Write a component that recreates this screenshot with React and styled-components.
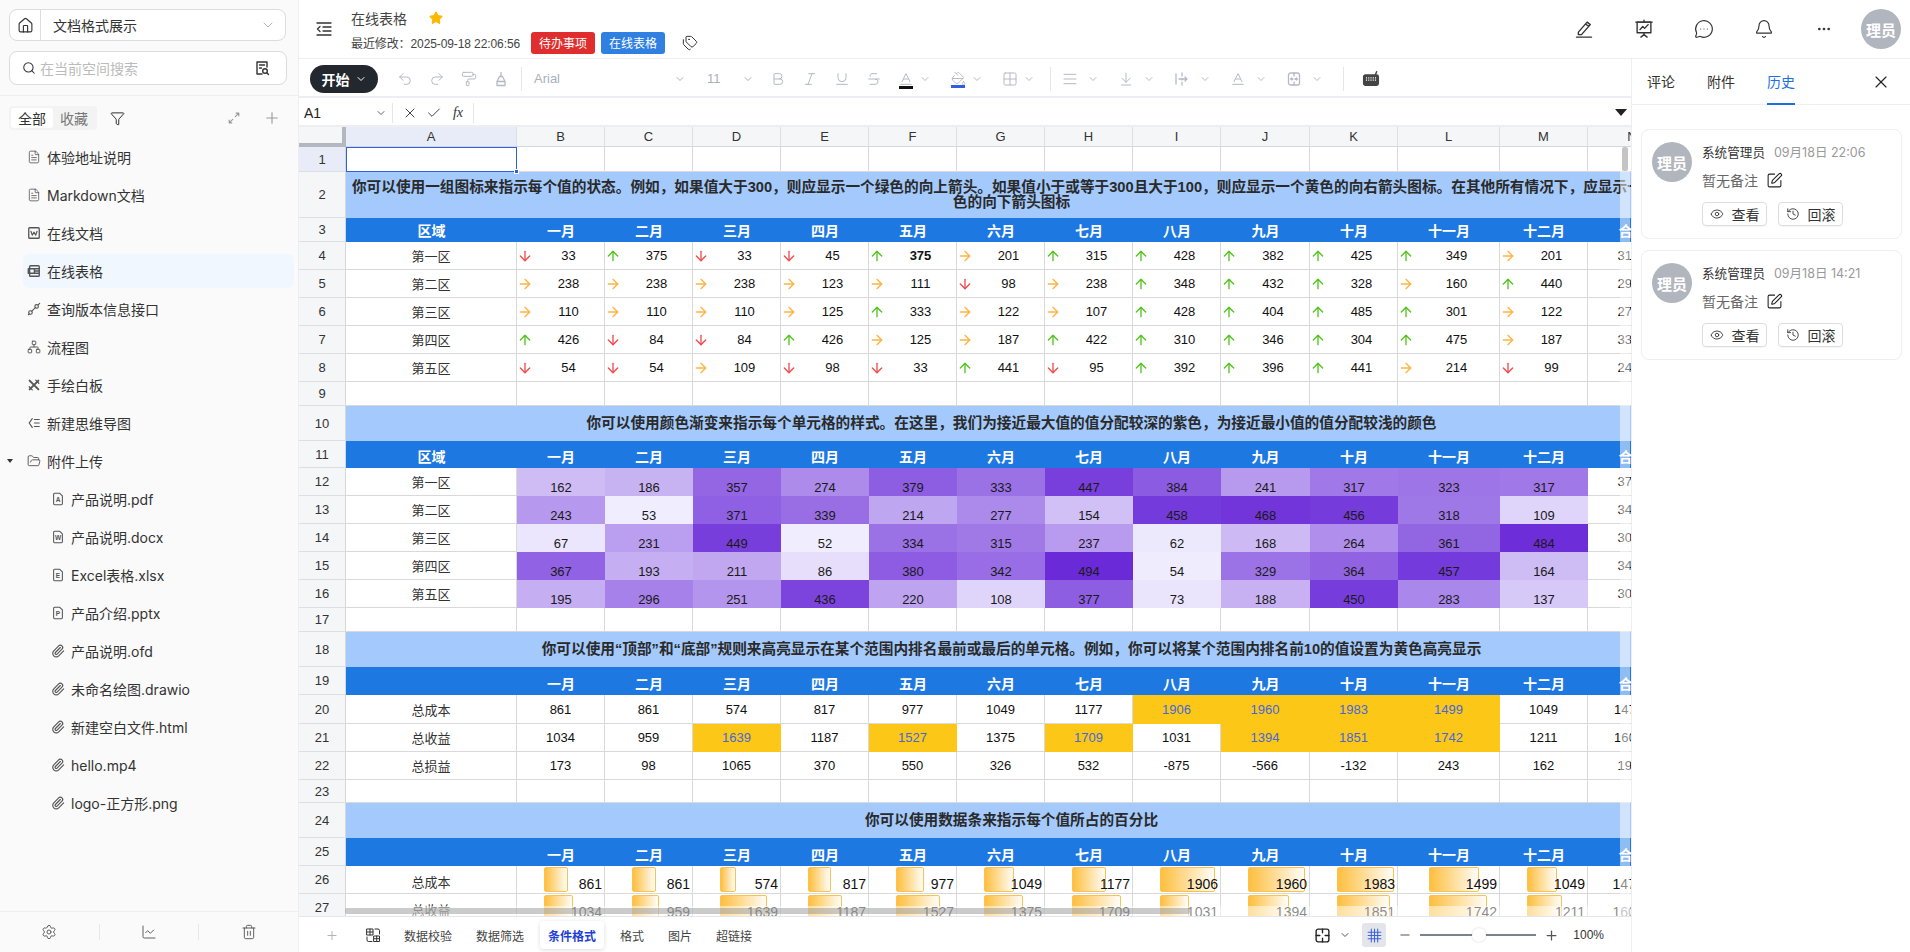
import React from "react";
import styled, { createGlobalStyle } from "styled-components";
import {
  House, ChevronDown, Search, Funnel, Plus, FileText, Network, Paperclip, Settings, ChartLine, Trash2,
  Undo2, Redo2, PaintRoller, Bold, Italic, Underline, Strikethrough, Grid2x2, AlignJustify, ArrowDownToLine,
  MessageCircleMore, Bell, Ellipsis, X, Check, Eye, History, SquarePen, Tags, Star, ArrowUp, ArrowRight,
  ArrowDown, Minus, FolderOpen, PaintBucket, Baseline,
} from "lucide-react";

const UI = `Inter, "Noto Sans CJK SC", sans-serif`;
const SHEET = `"Liberation Sans", "Noto Sans CJK SC", sans-serif`;

const Global = createGlobalStyle`
  html, body { margin: 0; height: 100%; overflow: hidden; background: #fff; }
  #root { height: 100%; }
  * { box-sizing: border-box; }
`;

const Page = styled.div`
  display: flex; width: 1910px; height: 952px; font-family: ${UI}; color: #333; font-size: 14px;
`;

/* ---------- Sidebar ---------- */
const Sidebar = styled.aside`
  width: 299px; flex: none; display: flex; flex-direction: column; background: #fafafa; border-right: 1px solid #eee;
`;
const SpaceSelect = styled.div`
  margin: 9px 12px 0 9px; height: 32px; display: flex; align-items: center; background: #fff;
  border: 1px solid #dcdcdc; border-radius: 8px; color: #b5b5b5;
`;
const HomeBox = styled.div`
  width: 31px; height: 100%; display: flex; align-items: center; justify-content: center; border-right: 1px solid #dcdcdc; color: #333;
`;
const SpaceName = styled.div`
  flex: 1; padding-left: 12px; color: #333; font-size: 14px;
`;
const SearchBox = styled.div`
  margin: 10px 11px 0 9px; height: 34px; display: flex; align-items: center; gap: 4px; padding: 0 16px 0 12px;
  background: #fff; border: 1px solid #dcdcdc; border-radius: 8px; color: #bbb; font-size: 14px;
  svg { flex: none; color: #333; }
`;
const SearchHint = styled.div` flex: 1; `;
const SideDivider = styled.div` margin-top: 10px; height: 1px; background: #eee; `;
const FilterRow = styled.div`
  margin: 10px 17px 0 9px; height: 24px; display: flex; align-items: center;
`;
const Segmented = styled.div`
  width: 88px; height: 24px; padding: 2px; display: flex; background: #f3f3f3; border-radius: 4px;
`;
const Segment = styled.div`
  flex: 1; display: flex; align-items: center; justify-content: center; font-size: 14px; border-radius: 3px;
  background: ${(p) => (p.$active ? "#fff" : "transparent")}; color: ${(p) => (p.$active ? "#333" : "#777")};
`;
const FilterIcon = styled.div` margin-left: 13px; display: flex; color: #222; `;
const FilterActions = styled.div`
  margin-left: auto; display: flex; align-items: center; gap: 22px; color: #999;
`;
const TreeList = styled.div` margin-top: 8px; display: flex; flex-direction: column; `;
const TreeRow = styled.div`
  height: 34px; margin: 2px 4px 2px ${(p) => (p.$child ? 47 : 23)}px; padding-left: 4px; display: flex; align-items: center; gap: 6px;
  border-radius: 6px; position: relative; font-size: 14px; color: #333; white-space: nowrap;
  background: ${(p) => (p.$active ? "#f0f7ff" : "transparent")};
`;
const TreeIcon = styled.span`
  width: 14px; height: 14px; flex: none; display: flex; align-items: center; justify-content: center; color: #555;
`;
const Caret = styled.span`
  position: absolute; left: -16px; top: 15px; width: 0; height: 0;
  border-left: 3.5px solid transparent; border-right: 3.5px solid transparent; border-top: 4px solid #333;
`;
const SideFooter = styled.div`
  margin-top: auto; height: 41px; display: flex; align-items: center; border-top: 1px solid #eee;
`;
const FooterCell = styled.div`
  flex: 1; height: 16px; display: flex; align-items: center; justify-content: center; color: #555;
  border-right: ${(p) => (p.$last ? "none" : "1px solid #e8e8e8")};
`;

/* ---------- Main ---------- */
const Main = styled.main` flex: 1; min-width: 0; display: flex; flex-direction: column; `;
const TopBar = styled.header`
  height: 59px; flex: none; display: flex; align-items: center; padding: 0 9px 0 17px; border-bottom: 1px solid #eee;
`;
const MenuToggle = styled.div` width: 18px; display: flex; color: #333; `;
const TitleBlock = styled.div` margin-left: 17px; display: flex; flex-direction: column; `;
const TitleLine = styled.div`
  height: 20px; display: flex; align-items: center; font-size: 14px; color: #444; margin-top: 3px;
  svg { margin-left: 22px; color: #fdb900; fill: #fdb900; }
`;
const MetaLine = styled.div`
  margin-top: 4px; height: 22px; display: flex; align-items: center; font-size: 12px; color: #444;
`;
const MetaText = styled.span`
  width: 180px; white-space: nowrap; font-family: ${SHEET}; letter-spacing: -0.1px;
`;
const Tag = styled.span`
  width: 64px; height: 22px; margin-right: 6px; display: flex; align-items: center; justify-content: center;
  border-radius: 3px; color: #fff; font-size: 12px; background: ${(p) => p.$color};
`;
const TagIcon = styled.span` margin-left: 11px; display: flex; color: #333; `;
const TopActions = styled.div` margin-left: auto; display: flex; align-items: center; `;
const TopIcon = styled.div`
  width: 60px; display: flex; justify-content: center; color: #333;
`;
const UserAvatar = styled.div`
  width: ${(p) => p.$size}px; height: ${(p) => p.$size}px; flex: none; border-radius: 50%; background: #b1b5bd; color: #fff;
  font-weight: 700; font-size: 15px; display: flex; align-items: center; justify-content: center; white-space: nowrap;
  margin-left: ${(p) => p.$ml || 0}px;
`;
const Workspace = styled.div` flex: 1; min-height: 0; display: flex; `;
const SheetColumn = styled.section` width: 1332px; flex: none; display: flex; flex-direction: column; `;

/* ---------- Toolbar ---------- */
const Toolbar = styled.div`
  height: 39px; flex: none; display: flex; align-items: center; padding: 2px 0 0 11px; border-bottom: 2px solid #eceef2; color: #b3b9c5;
`;
const StartPill = styled.div`
  width: 68px; height: 28px; border-radius: 14px; background: #23272e; color: #fff; font-weight: 700; font-size: 14px;
  display: flex; align-items: center; justify-content: center; gap: 5px; margin-right: 11px;
`;
const ToolBtn = styled.div`
  width: 32px; height: 24px; flex: none; display: flex; align-items: center; justify-content: center; color: #b3b9c5;
`;
const ToolDrop = styled.div`
  width: ${(p) => p.$w}px; flex: none; display: flex; align-items: center; color: #b3b9c5; margin-left: ${(p) => p.$ml || 0}px;
`;
const ToolDropIcon = styled.span` width: 24px; display: flex; justify-content: center; position: relative; `;
const ColorBar = styled.span`
  position: absolute; left: 5px; right: 5px; bottom: -2px; height: 3px; background: ${(p) => p.$color};
`;
const ToolChevron = styled.span` margin-left: ${(p) => p.$gap}px; display: flex; color: #b3b9c5; `;
const ToolDivider = styled.div`
  width: 1px; height: 24px; flex: none; background: #e4e6ea; margin: 0 ${(p) => p.$r}px 0 ${(p) => p.$l}px;
`;
const FontSelect = styled.div`
  width: ${(p) => p.$w}px; margin-right: ${(p) => p.$mr}px; padding: 0 0 0 ${(p) => p.$pl}px; flex: none; display: flex; align-items: center;
  justify-content: space-between; font-size: 13px; color: #a9afbb; font-family: ${SHEET};
`;

/* ---------- Formula ---------- */
const FormulaBar = styled.div`
  height: 29px; flex: none; display: flex; align-items: center; padding-top: 2px; border-bottom: 2px solid #eceef2; color: #333;
`;
const NameBox = styled.div`
  width: 94px; height: 20px; padding: 0 5px 0 5px; display: flex; align-items: center; justify-content: space-between;
  border-right: 1px solid #e4e6ea; font-family: ${SHEET}; font-size: 14px; color: #222;
  svg { color: #666; }
`;
const FormulaBtn = styled.div`
  width: 24px; display: flex; justify-content: center; color: #333; font: italic 14px "Liberation Serif", serif;
`;
const FormulaActions = styled.div`
  height: 20px; padding: 0 3px 0 5px; display: flex; align-items: center; border-right: 1px solid #e4e6ea;
`;
const FormulaArrow = styled.div`
  margin-left: auto; margin-right: 4px; width: 0; height: 0;
  border-left: 6px solid transparent; border-right: 6px solid transparent; border-top: 7px solid #222;
`;

/* ---------- Grid ---------- */
const Viewport = styled.div` flex: 1; min-height: 0; position: relative; overflow: hidden; background: #fff; `;
const GridBox = styled.div`
  display: grid; width: max-content; font-family: ${SHEET}; font-size: 13px; color: #111;
  grid-template-columns: 47px 171px repeat(8, 88px) 89px 88px 102px 88px 89px;
  grid-template-rows: 20px 25px 46px 24px repeat(5, 28px) 24px 35px 27px repeat(5, 28px) 24px 35px 28px 29px 28px 28px 23px 35px 28px 28px 28px;
`;
const Corner = styled.div`
  background: #f5f6f8; border-right: 4px solid #b3b8c0; border-bottom: 4px solid #b3b8c0;
`;
const ColHead = styled.div`
  display: flex; align-items: center; justify-content: center; color: #333; border-right: 1px solid #dcdfe4; border-bottom: 1px solid #d4d7dc;
  background: ${(p) => (p.$active ? "#e8ecf8" : "#f5f6f8")};
`;
const RowHead = styled.div`
  display: flex; align-items: center; justify-content: center; color: #333; border-right: 1px solid #d4d7dc; border-bottom: 1px solid #dcdfe4;
  background: ${(p) => (p.$active ? "#e8ecf8" : "#f5f6f8")};
`;
const Cell = styled.div`
  display: flex; align-items: center; justify-content: center; overflow: hidden; white-space: nowrap; background: #fff;
  border-right: 1px solid #d9d9d9; border-bottom: 1px solid #d9d9d9;
`;
const ActiveCell = styled.div`
  position: relative; background: #fff; border: 1px solid #2f5fe0;
`;
const FillHandle = styled.span`
  position: absolute; right: -3px; bottom: -3px; width: 5px; height: 5px; background: #2f5fe0; border: 1px solid #fff;
`;
const LabelCell = styled(Cell)` color: #333; `;
const LabelLow = styled(Cell)` color: #333; align-items: flex-end; padding-bottom: 2px; `;
const TitleCell = styled.div`
  grid-column: span 14; display: flex; align-items: center; justify-content: center; text-align: center; padding: 0 5px;
  background: #a3c9fd; color: #2a2a2a; font-weight: 700; font-size: 14.67px; line-height: 15px;
`;
const HeaderCell = styled.div`
  display: flex; align-items: flex-end; justify-content: center; padding-bottom: 2px; overflow: hidden; white-space: nowrap;
  background: #1e78e2; color: #fff; font-weight: 700; font-size: 14px;
`;
const IconCell = styled(Cell)` justify-content: flex-start; `;
const ArrowBox = styled.span`
  width: 16px; flex: none; display: flex; justify-content: center;
  color: ${(p) => ({ up: "#52c41a", right: "#ffb340", down: "#f5484a" })[p.$dir]};
`;
const ArrowValue = styled.span`
  flex: 1; text-align: center; font-weight: ${(p) => (p.$bold ? 700 : 400)};
`;
const HeatCell = styled.div`
  display: flex; align-items: flex-end; justify-content: center; padding-bottom: 1px; color: #1a1a1a;
`;
const RankCell = styled(Cell)`
  ${(p) => p.$hot && `background: #fcc716; color: #4668d8; border-color: #fcc716;`}
`;
const BarCell = styled(Cell)`
  position: relative; justify-content: flex-end; align-items: flex-end; padding: 0 2px 1px 0; font-size: 14px; overflow: hidden;
`;
const BarFill = styled.span`
  position: absolute; top: 1px; bottom: 1px; border: 1px solid #fdc14e; border-radius: 2px;
  background: linear-gradient(90deg, #fdbf3f, #fffdf8);
`;
const BarValue = styled.span` position: relative; `;
const PlainLow = styled(Cell)` align-items: flex-end; padding-bottom: 1px; font-size: 14px; `;

const VOverlay = styled.div`
  position: absolute; left: 1321px; width: 10px; top: 20px; bottom: 0; background: rgba(255,255,255,.5);
`;
const VThumb = styled.div`
  position: absolute; left: 1323px; width: 6px; top: 20px; height: 24px; background: #c4c4c4; border-radius: 2px;
`;
const HOverlay = styled.div`
  position: absolute; left: 47px; right: 0; bottom: 0; height: 10px; background: rgba(255,255,255,.5);
`;
const HThumb = styled.div`
  position: absolute; left: 46px; width: 845px; bottom: 2px; height: 6px; background: rgba(130,130,130,.42); border-radius: 2px;
`;

/* ---------- Sheet tabs ---------- */
const SheetTabs = styled.div`
  height: 36px; flex: none; display: flex; align-items: center; padding: 1px 27px 0 26px; border-top: 1px solid #e4e6ea; font-size: 12px; color: #444;
`;
const AddSheet = styled.div` width: 14px; display: flex; color: #aaa; `;
const TabsIcon = styled.div` margin: 0 15px 0 26px; display: flex; color: #333; `;
const TabsList = styled.div` display: flex; gap: 8px; align-items: center; `;
const SheetTab = styled.div`
  height: 28px; padding: 0 8px; display: flex; align-items: center; border-radius: 4px;
  ${(p) => p.$active && `color: #1f3fd6; font-weight: 600; background: #fff; box-shadow: 0 1px 4px rgba(0,0,0,.14);`}
`;
const ZoomTools = styled.div` margin-left: auto; display: flex; align-items: center; color: #555; `;
const GridToggle = styled.div`
  width: 24px; height: 24px; margin: 0 12px 0 11px; display: flex; align-items: center; justify-content: center;
  background: #e3e5ea; border-radius: 3px; color: #3f64db;
`;
const SliderTrack = styled.div`
  position: relative; width: 116px; height: 2.5px; margin: 0 8px; background: #7a8290;
`;
const SliderKnob = styled.span`
  position: absolute; left: 52px; top: -6px; width: 14px; height: 14px; border-radius: 50%; background: #fff; box-shadow: 0 0 2px rgba(0,0,0,.2);
`;
const ZoomLabel = styled.span` margin-left: 14px; color: #333; font-size: 12px; font-family: ${SHEET}; `;

/* ---------- Right panel ---------- */
const SidePanel = styled.aside`
  flex: 1; min-width: 0; display: flex; flex-direction: column; border-left: 1px solid #eee;
`;
const PanelTabs = styled.div`
  height: 46px; flex: none; display: flex; align-items: stretch; padding: 0 19px 0 15px; gap: 32px; border-bottom: 1px solid #eee;
`;
const PanelTab = styled.div`
  display: flex; align-items: center; font-size: 14px; margin-bottom: -1px;
  color: ${(p) => (p.$active ? "#1f6fe0" : "#333")};
  border-bottom: 2px solid ${(p) => (p.$active ? "#1f6fe0" : "transparent")};
`;
const PanelClose = styled.div` margin-left: auto; display: flex; align-items: center; color: #222; `;
const CardList = styled.div` padding: 24px 8px 0 9px; display: flex; flex-direction: column; gap: 11px; `;
const HistoryCard = styled.div`
  height: 110px; padding: 12px 10px; display: flex; gap: 10px; border: 1px solid #eee; border-radius: 8px;
`;
const CardBody = styled.div` flex: 1; min-width: 0; `;
const CardTop = styled.div` height: 18px; display: flex; align-items: center; gap: 9px; white-space: nowrap; `;
const CardName = styled.span` font-size: 12.6px; color: #333; `;
const CardDate = styled.span` font-size: 12.5px; color: #999; `;
const CardNote = styled.div`
  margin-top: 10px; height: 20px; display: flex; align-items: center; gap: 8px; font-size: 14px; color: #666;
  svg { color: #222; }
`;
const CardActions = styled.div` margin-top: 12px; display: flex; gap: 11px; `;
const CardBtn = styled.div`
  width: 65px; height: 24px; display: flex; align-items: center; justify-content: center; gap: 8px;
  border: 1px solid #ddd; border-radius: 4px; font-size: 14px; color: #333; box-shadow: 0 1px 1px rgba(0,0,0,.04);
`;

/* ---------- Drawn icons ---------- */
const Ico = ({ s = 14, children, ...r }) => (
  <svg width={s} height={s} viewBox="0 0 16 16" fill="none" stroke="currentColor" strokeWidth="1.3" strokeLinecap="round" strokeLinejoin="round" {...r}>{children}</svg>
);
const WordIcon = () => (<Ico><rect x="2" y="2" width="12" height="12" rx="1" strokeWidth="1.5" /><path d="M4.5 6l1.500 4.500L8 7l2 3.500L11.500 6" /></Ico>);
const SheetIcon = () => (<Ico strokeWidth="1.6"><rect x="3" y="2" width="11" height="12" rx="1" /><path d="M1.500 5.500h7v5h-7zM8.500 8H14M8.500 5.500H14M8.500 10.500H14" /></Ico>);
const ApiIcon = () => (<Ico><circle cx="4" cy="12" r="2" /><circle cx="11" cy="5" r="2" /><path d="M5.500 10.500l4-4M13 3l1.500-1.500M1.500 14.500l1-1" /></Ico>);
const BoardIcon = () => (<Ico strokeWidth="2.200"><path d="M3 3l4 4M9 9l4 4M13 3L3 13" /><path d="M10 2.500l3.500 3.500M2.500 10l3.500 3.500" strokeWidth="1.400" /></Ico>);
const MindIcon = () => (<Ico><path d="M6 3L2.500 8 6 13M8.500 4H14M8.500 8H14M8.500 12H14" /></Ico>);
const FileLetter = ({ l }) => (
  <Ico strokeWidth="1.2"><path d="M3 2.500a1 1 0 0 1 1-1h6l3 3v9a1 1 0 0 1-1 1H4a1 1 0 0 1-1-1z" /><text x="8" y="11.500" textAnchor="middle" fontSize="7.500" fontWeight="700" fill="currentColor" stroke="none" fontFamily="Liberation Sans">{l}</text></Ico>
);
const ExpandIcon = () => (<Ico><path d="M9.500 6.500L13.500 2.500M10.500 2.500h3v3M6.500 9.500l-4 4M5.500 13.500h-3v-3" /></Ico>);
const MenuIcon = () => (<Ico s={16} strokeWidth="1.300"><path d="M1 2h14M7 6h8M7 10h8M1 14h14M4 5.500L1.500 8 4 10.500" /></Ico>);
const PenLine = () => (<Ico s={20} strokeWidth="1.100"><path d="M3.500 10.500L10.500 2.500l2.500 2-7 8H3.500zM9.300 4l2.500 2M2 14.500h12" /></Ico>);
const BoardShow = () => (<Ico s={20} strokeWidth="1.100"><rect x="2.500" y="2.500" width="11" height="8.500" /><path d="M1.500 2.500h13M8 1v1.500M8 11v1.500M5.500 14.500L8 12.500l2.500 2M4.800 8.500l2.200-2.500 1.500 1.500 2.800-3" /></Ico>);
const KeyboardIcon = () => (<Ico s={18} stroke="#444"><path d="M12 4l1-2.500" /><rect x="1.500" y="4.500" width="13" height="9" rx="1.500" fill="#444" /><path d="M3.500 7h9M3.500 9h9" stroke="#fff" strokeWidth="1" strokeDasharray="1 1" strokeLinecap="butt" /></Ico>);
const SweepIcon = () => (<Ico s={16}><path d="M8 1.500v4M6.500 5.500h3l2.500 5V14.500H4V10.500zM4 10.500h8" /></Ico>);
const ToggleGrid = () => (<Ico s={16} strokeWidth="1"><rect x="2" y="2" width="6" height="6" /><path d="M5 2v6M2 5h6" /><rect x="9" y="9" width="5.500" height="5.500" /><path d="M11.700 9v5.500M9 11.700h5.500" /><path d="M10 2h3a1.500 1.500 0 0 1 1.500 1.500V7M7 14.500H3.500A1.500 1.500 0 0 1 2 13v-3" /></Ico>);
const GridBreak = () => (<Ico s={17} stroke="#222" strokeWidth="1.300"><rect x="2" y="2" width="12" height="12" rx="2" /><path d="M8 2v3.500M8 10.500V14M2 8h3.500M10.500 8H14" /></Ico>);
const GridLines = () => (<Ico s={17} strokeWidth="1"><path d="M5 2v12M8 2v12M11 2v12M2 5h12M2 8h12M2 11h12" /></Ico>);
const SearchDoc = () => (<Ico s={16} strokeWidth="1.400"><path d="M13 7V2H3v12h5M5.500 5h5M5.500 8h2" /><circle cx="11" cy="11" r="2.300" /><path d="M12.800 12.800L14.500 14.500" /></Ico>);
const WrapIcon = () => (<Ico s={16}><path d="M2 3v10M8 2v3M8 7.500V9M8 11.500V14M5 8h8M11 6l2 2-2 2" /></Ico>);
const MergeIcon = () => (<Ico s={16}><rect x="2.500" y="2" width="11" height="12" rx="2" /><path d="M8 2v3M8 11v3M4.500 8H7M5.500 7l1.500 1-1.500 1M11.500 8H9M10.500 7L9 8l1.500 1" /></Ico>);

/* ---------- Data ---------- */
const MONTHS = ["一月", "二月", "三月", "四月", "五月", "六月", "七月", "八月", "九月", "十月", "十一月", "十二月"];
const COLS = ["B", "C", "D", "E", "F", "G", "H", "I", "J", "K", "L", "M", "N"];
const ICON_ROWS = [
  ["第一区", [33, 375, 33, 45, 375, 201, 315, 428, 382, 425, 349, 201], 3162],
  ["第二区", [238, 238, 238, 123, 111, 98, 238, 348, 432, 328, 160, 440], 2992],
  ["第三区", [110, 110, 110, 125, 333, 122, 107, 428, 404, 485, 301, 122], 2745],
  ["第四区", [426, 84, 84, 426, 125, 187, 422, 310, 346, 304, 475, 187], 3376],
  ["第五区", [54, 54, 109, 98, 33, 441, 95, 392, 396, 441, 214, 99], 2426],
];
const HEAT_ROWS = [
  ["第一区", [162, 186, 357, 274, 379, 333, 447, 384, 241, 317, 323, 317], 3720],
  ["第二区", [243, 53, 371, 339, 214, 277, 154, 458, 468, 456, 318, 109], 3460],
  ["第三区", [67, 231, 449, 52, 334, 315, 237, 62, 168, 264, 361, 484], 3024],
  ["第四区", [367, 193, 211, 86, 380, 342, 494, 54, 329, 364, 457, 164], 3441],
  ["第五区", [195, 296, 251, 436, 220, 108, 377, 73, 188, 450, 283, 137], 3014],
];
const COST = [861, 861, 574, 817, 977, 1049, 1177, 1906, 1960, 1983, 1499, 1049];
const INCOME = [1034, 959, 1639, 1187, 1527, 1375, 1709, 1031, 1394, 1851, 1742, 1211];
const PROFIT = [173, 98, 1065, 370, 550, 326, 532, -875, -566, -132, 243, 162];
const HOT_COST = [7, 8, 9, 10];
const HOT_INCOME = [2, 4, 6, 8, 9, 10];

const TITLES = {
  icon: "你可以使用一组图标来指示每个值的状态。例如，如果值大于300，则应显示一个绿色的向上箭头。如果值小于或等于300且大于100，则应显示一个黄色的向右箭头图标。在其他所有情况下，应显示一个红色的向下箭头图标",
  heat: "你可以使用颜色渐变来指示每个单元格的样式。在这里，我们为接近最大值的值分配较深的紫色，为接近最小值的值分配较浅的颜色",
  rank: "你可以使用“顶部”和“底部”规则来高亮显示在某个范围内排名最前或最后的单元格。例如，你可以将某个范围内排名前10的值设置为黄色高亮显示",
  bar: "你可以使用数据条来指示每个值所占的百分比",
};

const heat = (v) => {
  const t = Math.max(0, (v - 52) / (494 - 52));
  const a = [240, 237, 254], b = [106, 42, 216];
  return `rgb(${a.map((c, i) => Math.round(c + (b[i] - c) * t)).join(",")})`;
};
const arrowDir = (v) => (v > 300 ? "up" : v > 100 ? "right" : "down");
const ARROWS = { up: ArrowUp, right: ArrowRight, down: ArrowDown };

const Blank = ({ n }) => (
  <>
    <RowHead>{n}</RowHead>
    {Array.from({ length: 14 }, (_, i) => <Cell key={i} />)}
  </>
);
const Head = ({ n, first }) => (
  <>
    <RowHead>{n}</RowHead>
    <HeaderCell>{first}</HeaderCell>
    {MONTHS.map((m) => <HeaderCell key={m}>{m}</HeaderCell>)}
    <HeaderCell>合计</HeaderCell>
  </>
);
const Title = ({ n, text }) => (
  <>
    <RowHead>{n}</RowHead>
    <TitleCell>{text}</TitleCell>
  </>
);
const RankRow = ({ n, label, values, hot = [], total }) => (
  <>
    <RowHead>{n}</RowHead>
    <LabelCell>{label}</LabelCell>
    {values.map((v, i) => <RankCell key={i} $hot={hot.includes(i)}>{v}</RankCell>)}
    <Cell>{total}</Cell>
  </>
);
const BarRow = ({ n, label, values, total }) => (
  <>
    <RowHead>{n}</RowHead>
    <LabelLow>{label}</LabelLow>
    {values.map((v, i) => (
      <BarCell key={i}>
        <BarFill style={{ left: "30.5%", width: `${(v / 1983) * 66}%` }} />
        <BarValue>{v}</BarValue>
      </BarCell>
    ))}
    <PlainLow>{total}</PlainLow>
  </>
);

const Sheet = () => (
  <Viewport>
    <GridBox>
      <Corner />
      <ColHead $active>A</ColHead>
      {COLS.map((c) => <ColHead key={c}>{c}</ColHead>)}

      <RowHead $active>1</RowHead>
      <ActiveCell><FillHandle /></ActiveCell>
      {COLS.map((c) => <Cell key={c} />)}

      <Title n={2} text={TITLES.icon} />
      <Head n={3} first="区域" />
      {ICON_ROWS.map(([label, vals, total], r) => (
        <React.Fragment key={label}>
          <RowHead>{4 + r}</RowHead>
          <LabelCell>{label}</LabelCell>
          {vals.map((v, i) => {
            const dir = arrowDir(v);
            const A = ARROWS[dir];
            return (
              <IconCell key={i}>
                <ArrowBox $dir={dir}><A size={16} strokeWidth={2} /></ArrowBox>
                <ArrowValue $bold={r === 0 && i === 4}>{v}</ArrowValue>
              </IconCell>
            );
          })}
          <Cell>{total}</Cell>
        </React.Fragment>
      ))}
      <Blank n={9} />
      <Title n={10} text={TITLES.heat} />
      <Head n={11} first="区域" />
      {HEAT_ROWS.map(([label, vals, total], r) => (
        <React.Fragment key={label}>
          <RowHead>{12 + r}</RowHead>
          <LabelCell>{label}</LabelCell>
          {vals.map((v, i) => <HeatCell key={i} style={{ background: heat(v) }}>{v}</HeatCell>)}
          <Cell>{total}</Cell>
        </React.Fragment>
      ))}
      <Blank n={17} />
      <Title n={18} text={TITLES.rank} />
      <Head n={19} first="" />
      <RankRow n={20} label="总成本" values={COST} hot={HOT_COST} total={14775} />
      <RankRow n={21} label="总收益" values={INCOME} hot={HOT_INCOME} total={16059} />
      <RankRow n={22} label="总损益" values={PROFIT} total={1946} />
      <Blank n={23} />
      <Title n={24} text={TITLES.bar} />
      <Head n={25} first="" />
      <BarRow n={26} label="总成本" values={COST} total={14775} />
      <BarRow n={27} label="总收益" values={INCOME} total={16059} />
    </GridBox>
    <VOverlay />
    <VThumb />
    <HOverlay />
    <HThumb />
  </Viewport>
);

const TREE = [
  { t: "体验地址说明", i: <FileText size={14} strokeWidth={1.4} /> },
  { t: "Markdown文档", i: <FileText size={14} strokeWidth={1.4} /> },
  { t: "在线文档", i: <WordIcon /> },
  { t: "在线表格", i: <SheetIcon />, active: true },
  { t: "查询版本信息接口", i: <ApiIcon /> },
  { t: "流程图", i: <Network size={14} strokeWidth={1.6} /> },
  { t: "手绘白板", i: <BoardIcon /> },
  { t: "新建思维导图", i: <MindIcon /> },
  { t: "附件上传", i: <FolderOpen size={14} strokeWidth={1.6} />, caret: true },
];
const clip = <Paperclip size={14} strokeWidth={2} />;
const CHILDREN = [
  ["产品说明.pdf", <FileLetter l="A" />], ["产品说明.docx", <FileLetter l="W" />], ["Excel表格.xlsx", <FileLetter l="E" />],
  ["产品介绍.pptx", <FileLetter l="P" />], ["产品说明.ofd", clip], ["未命名绘图.drawio", clip],
  ["新建空白文件.html", clip], ["hello.mp4", clip], ["logo-正方形.png", clip],
];
const Chev = ({ gap }) => <ToolChevron $gap={gap}><ChevronDown size={12} /></ToolChevron>;

const Card = ({ date }) => (
  <HistoryCard>
    <UserAvatar $size={40}>理员</UserAvatar>
    <CardBody>
      <CardTop><CardName>系统管理员</CardName><CardDate>{date}</CardDate></CardTop>
      <CardNote>暂无备注<SquarePen size={17} strokeWidth={1.5} /></CardNote>
      <CardActions>
        <CardBtn><Eye size={14} strokeWidth={1.5} />查看</CardBtn>
        <CardBtn><History size={14} strokeWidth={1.5} />回滚</CardBtn>
      </CardActions>
    </CardBody>
  </HistoryCard>
);

export default function App() {
  return (
    <Page>
      <Global />
      <Sidebar>
        <SpaceSelect>
          <HomeBox><House size={17} strokeWidth={1.6} /></HomeBox>
          <SpaceName>文档格式展示</SpaceName>
          <ChevronDown size={16} strokeWidth={1.5} style={{ marginRight: 9 }} />
        </SpaceSelect>
        <SearchBox>
          <Search size={14} strokeWidth={1.8} />
          <SearchHint>在当前空间搜索</SearchHint>
          <SearchDoc />
        </SearchBox>
        <SideDivider />
        <FilterRow>
          <Segmented>
            <Segment $active>全部</Segment>
            <Segment>收藏</Segment>
          </Segmented>
          <FilterIcon><Funnel size={15} strokeWidth={1.5} /></FilterIcon>
          <FilterActions><ExpandIcon /><Plus size={18} strokeWidth={1.5} /></FilterActions>
        </FilterRow>
        <TreeList>
          {TREE.map((n) => (
            <TreeRow key={n.t} $active={n.active}>
              {n.caret && <Caret />}
              <TreeIcon>{n.i}</TreeIcon>{n.t}
            </TreeRow>
          ))}
          {CHILDREN.map(([t, i]) => (
            <TreeRow key={t} $child><TreeIcon>{i}</TreeIcon>{t}</TreeRow>
          ))}
        </TreeList>
        <SideFooter>
          <FooterCell><Settings size={16} strokeWidth={1.4} /></FooterCell>
          <FooterCell><ChartLine size={16} strokeWidth={1.4} /></FooterCell>
          <FooterCell $last><Trash2 size={16} strokeWidth={1.4} /></FooterCell>
        </SideFooter>
      </Sidebar>

      <Main>
        <TopBar>
          <MenuToggle><MenuIcon /></MenuToggle>
          <TitleBlock>
            <TitleLine>在线表格<Star size={14} /></TitleLine>
            <MetaLine>
              <MetaText>最近修改：2025-09-18 22:06:56</MetaText>
              <Tag $color="#e02d2d">待办事项</Tag>
              <Tag $color="#2f80e0">在线表格</Tag>
              <TagIcon><Tags size={16} strokeWidth={1.5} /></TagIcon>
            </MetaLine>
          </TitleBlock>
          <TopActions>
            <TopIcon><PenLine /></TopIcon>
            <TopIcon><BoardShow /></TopIcon>
            <TopIcon><MessageCircleMore size={20} strokeWidth={1.4} /></TopIcon>
            <TopIcon><Bell size={20} strokeWidth={1.4} /></TopIcon>
            <TopIcon><Ellipsis size={16} /></TopIcon>
            <UserAvatar $size={40} $ml={7}>理员</UserAvatar>
          </TopActions>
        </TopBar>
        <Workspace>
          <SheetColumn>
            <Toolbar>
              <StartPill>开始<ChevronDown size={12} /></StartPill>
              <ToolBtn><Undo2 size={16} strokeWidth={1.5} /></ToolBtn>
              <ToolBtn><Redo2 size={16} strokeWidth={1.5} /></ToolBtn>
              <ToolBtn><PaintRoller size={16} strokeWidth={1.5} /></ToolBtn>
              <ToolBtn><SweepIcon /></ToolBtn>
              <ToolDivider $l={4} $r={4} />
              <FontSelect $w={160} $mr={15} $pl={8}>Arial<ChevronDown size={12} /></FontSelect>
              <FontSelect $w={53} $mr={8} $pl={6}>11<ChevronDown size={12} /></FontSelect>
              <ToolBtn><Bold size={16} strokeWidth={1.5} /></ToolBtn>
              <ToolBtn><Italic size={16} strokeWidth={1.5} /></ToolBtn>
              <ToolBtn><Underline size={16} strokeWidth={1.5} /></ToolBtn>
              <ToolBtn><Strikethrough size={16} strokeWidth={1.5} /></ToolBtn>
              <ToolDrop $w={52} $ml={4}><ToolDropIcon><Baseline size={16} strokeWidth={1.5} /><ColorBar $color="#111" /></ToolDropIcon><Chev gap={1} /></ToolDrop>
              <ToolDrop $w={52}><ToolDropIcon><PaintBucket size={15} strokeWidth={1.5} /><ColorBar $color="#2f5fe0" /></ToolDropIcon><Chev gap={1} /></ToolDrop>
              <ToolDrop $w={52}><ToolDropIcon><Grid2x2 size={16} strokeWidth={1.5} /></ToolDropIcon><Chev gap={1} /></ToolDrop>
              <ToolDivider $l={0} $r={7} />
              <ToolDrop $w={56}><ToolDropIcon><AlignJustify size={16} strokeWidth={1.5} /></ToolDropIcon><Chev gap={5} /></ToolDrop>
              <ToolDrop $w={56}><ToolDropIcon><ArrowDownToLine size={16} strokeWidth={1.5} /></ToolDropIcon><Chev gap={5} /></ToolDrop>
              <ToolDrop $w={56}><ToolDropIcon><WrapIcon /></ToolDropIcon><Chev gap={5} /></ToolDrop>
              <ToolDrop $w={56}><ToolDropIcon><Baseline size={16} strokeWidth={1.5} /></ToolDropIcon><Chev gap={5} /></ToolDrop>
              <ToolDrop $w={56}><ToolDropIcon><MergeIcon /></ToolDropIcon><Chev gap={5} /></ToolDrop>
              <ToolDivider $l={5} $r={18} />
              <KeyboardIcon />
            </Toolbar>
            <FormulaBar>
              <NameBox>A1<ChevronDown size={12} /></NameBox>
              <FormulaActions>
                <FormulaBtn><X size={16} strokeWidth={1.4} /></FormulaBtn>
                <FormulaBtn><Check size={16} strokeWidth={1.4} /></FormulaBtn>
                <FormulaBtn>fx</FormulaBtn>
              </FormulaActions>
              <FormulaArrow />
            </FormulaBar>
            <Sheet />
            <SheetTabs>
              <AddSheet><Plus size={15} strokeWidth={1.5} /></AddSheet>
              <TabsIcon><ToggleGrid /></TabsIcon>
              <TabsList>
                <SheetTab>数据校验</SheetTab>
                <SheetTab>数据筛选</SheetTab>
                <SheetTab $active>条件格式</SheetTab>
                <SheetTab>格式</SheetTab>
                <SheetTab>图片</SheetTab>
                <SheetTab>超链接</SheetTab>
              </TabsList>
              <ZoomTools>
                <GridBreak />
                <ChevronDown size={12} style={{ marginLeft: 8 }} />
                <GridToggle><GridLines /></GridToggle>
                <Minus size={14} />
                <SliderTrack><SliderKnob /></SliderTrack>
                <Plus size={15} />
                <ZoomLabel>100%</ZoomLabel>
              </ZoomTools>
            </SheetTabs>
          </SheetColumn>
          <SidePanel>
            <PanelTabs>
              <PanelTab>评论</PanelTab>
              <PanelTab>附件</PanelTab>
              <PanelTab $active>历史</PanelTab>
              <PanelClose><X size={20} strokeWidth={1.4} /></PanelClose>
            </PanelTabs>
            <CardList>
              <Card date="09月18日 22:06" />
              <Card date="09月18日 14:21" />
            </CardList>
          </SidePanel>
        </Workspace>
      </Main>
    </Page>
  );
}
